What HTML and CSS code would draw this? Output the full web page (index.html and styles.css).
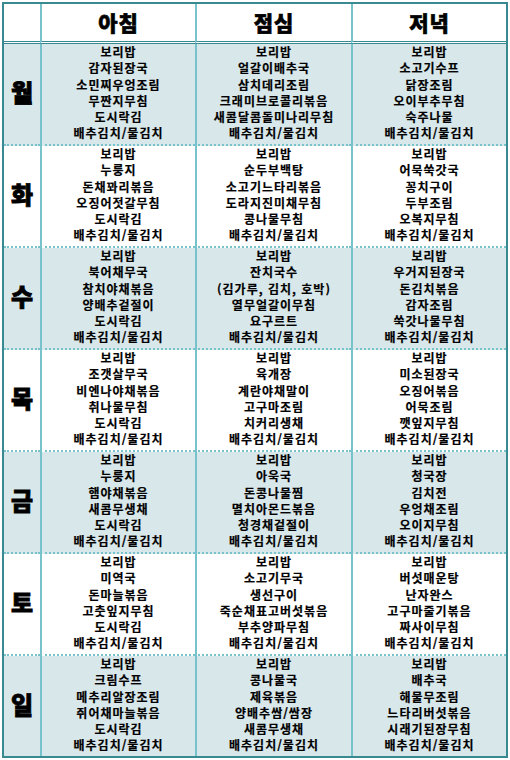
FILE: index.html
```html
<!DOCTYPE html>
<html lang="ko">
<head>
<meta charset="utf-8">
<title>주간 식단표</title>
<link rel="stylesheet" href="styles.css">
</head>
<body>
<div class="menu">
  <div class="head corner"></div>
  <div class="head meal">아침</div>
  <div class="head meal">점심</div>
  <div class="head meal">저녁</div>

  <div class="day shade">월</div>
  <div class="cell shade">보리밥<br>감자된장국<br>소민찌우엉조림<br>무짠지무침<br>도시락김<br>배추김치/물김치</div>
  <div class="cell shade">보리밥<br>얼갈이배추국<br>삼치데리조림<br>크래미브로콜리볶음<br>새콤달콤돌미나리무침<br>배추김치/물김치</div>
  <div class="cell shade">보리밥<br>소고기수프<br>닭장조림<br>오이부추무침<br>숙주나물<br>배추김치/물김치</div>

  <div class="day">화</div>
  <div class="cell">보리밥<br>누룽지<br>돈채꽈리볶음<br>오징어젓갈무침<br>도시락김<br>배추김치/물김치</div>
  <div class="cell">보리밥<br>순두부백탕<br>소고기느타리볶음<br>도라지진미채무침<br>콩나물무침<br>배추김치/물김치</div>
  <div class="cell">보리밥<br>어묵쑥갓국<br>꽁치구이<br>두부조림<br>오복지무침<br>배추김치/물김치</div>

  <div class="day shade">수</div>
  <div class="cell shade">보리밥<br>북어채무국<br>참치야채볶음<br>양배추겉절이<br>도시락김<br>배추김치/물김치</div>
  <div class="cell shade">보리밥<br>잔치국수<br>(김가루, 김치, 호박)<br>열무얼갈이무침<br>요구르트<br>배추김치/물김치</div>
  <div class="cell shade">보리밥<br>우거지된장국<br>돈김치볶음<br>감자조림<br>쑥갓나물무침<br>배추김치/물김치</div>

  <div class="day">목</div>
  <div class="cell">보리밥<br>조갯살무국<br>비엔나야채볶음<br>취나물무침<br>도시락김<br>배추김치/물김치</div>
  <div class="cell">보리밥<br>육개장<br>계란야채말이<br>고구마조림<br>치커리생채<br>배추김치/물김치</div>
  <div class="cell">보리밥<br>미소된장국<br>오징어볶음<br>어묵조림<br>깻잎지무침<br>배추김치/물김치</div>

  <div class="day shade">금</div>
  <div class="cell shade">보리밥<br>누룽지<br>햄야채볶음<br>새콤무생채<br>도시락김<br>배추김치/물김치</div>
  <div class="cell shade">보리밥<br>아욱국<br>돈콩나물찜<br>멸치아몬드볶음<br>청경채겉절이<br>배추김치/물김치</div>
  <div class="cell shade">보리밥<br>청국장<br>김치전<br>우엉채조림<br>오이지무침<br>배추김치/물김치</div>

  <div class="day">토</div>
  <div class="cell">보리밥<br>미역국<br>돈마늘볶음<br>고춧잎지무침<br>도시락김<br>배추김치/물김치</div>
  <div class="cell">보리밥<br>소고기무국<br>생선구이<br>죽순채표고버섯볶음<br>부추양파무침<br>배추김치/물김치</div>
  <div class="cell">보리밥<br>버섯매운탕<br>난자완스<br>고구마줄기볶음<br>짜사이무침<br>배추김치/물김치</div>

  <div class="day shade last">일</div>
  <div class="cell shade last">보리밥<br>크림수프<br>메추리알장조림<br>쥐어채마늘볶음<br>도시락김<br>배추김치/물김치</div>
  <div class="cell shade last">보리밥<br>콩나물국<br>제육볶음<br>양배추쌈/쌈장<br>새콤무생채<br>배추김치/물김치</div>
  <div class="cell shade last">보리밥<br>배추국<br>해물무조림<br>느타리버섯볶음<br>시래기된장무침<br>배추김치/물김치</div>
</div>
</body>
</html>
```
FILE: styles.css
```css
* {
  box-sizing: border-box;
}

html, body {
  margin: 0;
  padding: 0;
  background: #ffffff;
}

body {
  padding: 2px 0 0 2px;
  font-family: "Noto Sans CJK KR", "Noto Sans", sans-serif;
  color: #000000;
}

.menu {
  width: 506px;
  display: grid;
  grid-template-columns: 36px 155px 156px 155px;
  grid-template-rows: 40px repeat(6, 102px) 100px;
  border: 2px solid #388a90;
}

.head {
  border-bottom: 3px double #388a90;
  display: flex;
  align-items: center;
  justify-content: center;
  font-weight: 900;
  font-size: 21px;
  letter-spacing: 1px;
  line-height: 1;
  padding-bottom: 1px;
  -webkit-text-stroke: 0.6px #000000;
}

.meal {
  border-left: 2px solid #78c2cb;
}

.day {
  display: flex;
  align-items: center;
  justify-content: center;
  font-weight: 900;
  font-size: 24px;
  line-height: 1;
  padding-bottom: 4px;
  border-bottom: 2px dotted #78c2cb;
  -webkit-text-stroke: 0.8px #000000;
}

.cell {
  border-left: 2px solid #78c2cb;
  border-bottom: 2px dotted #78c2cb;
  text-align: center;
  font-weight: 700;
  font-size: 12px;
  letter-spacing: 1px;
  line-height: 16.3px;
  white-space: nowrap;
  padding-top: 0;
  -webkit-text-stroke: 0.2px #000000;
}

.shade {
  background: #d8e7ea;
}

.last {
  border-bottom: none;
}
```
